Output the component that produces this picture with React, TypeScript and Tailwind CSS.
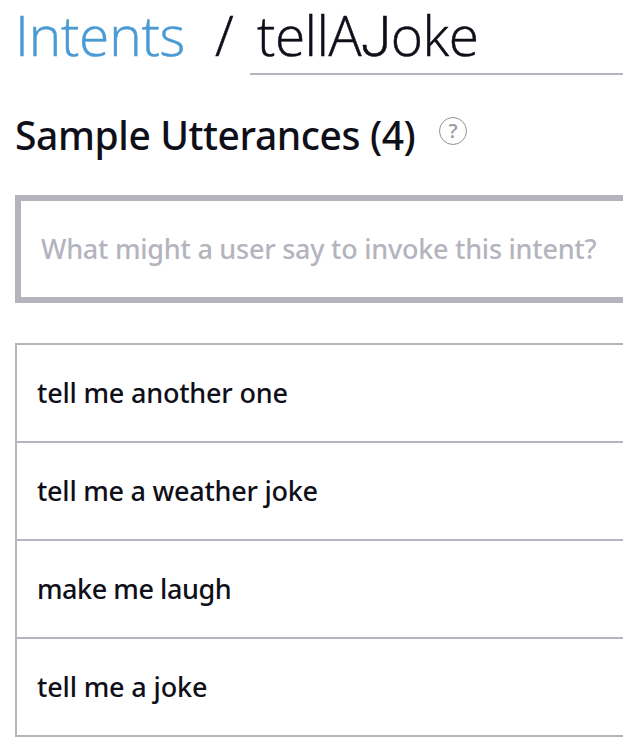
const utterances = [
  { text: "tell me another one", tracking: "tracking-[-0.2px]" },
  { text: "tell me a weather joke", tracking: "tracking-[-0.25px]" },
  { text: "make me laugh", tracking: "tracking-[-0.45px]" },
  { text: "tell me a joke", tracking: "tracking-[-0.15px]" },
];

export default function App() {
  return (
    <main className="h-[753px] w-full bg-white pl-[15px] font-['Noto_Sans',sans-serif] whitespace-nowrap text-[#0f0f19]">
      <header className="flex h-[75px] font-['Open_Sans',sans-serif] text-[55px] leading-[69px] font-light [-webkit-text-stroke:0.5px_currentColor]">
        <a className="w-[200px] text-[#4a9ad4]"><span className="tracking-[-0.2px]">Intents</span></a>
        <span className="w-[35px]">/</span>
        <div className="flex-1 border-b-2 border-[#b5b5bd] pl-[7px]">
          <span className="tracking-[-0.5px]">tellA<span className="font-[Roboto]">J</span>oke</span>
        </div>
      </header>
      <div className="flex h-[120px] pt-[35px]">
        <h1 className="w-[424px] text-[39px] leading-[50px] font-medium"><span className="tracking-[-0.4px]">Sample Utterances (4)</span></h1>
        <span className="mt-[7px] flex size-7 items-center justify-center rounded-full border border-[#92929a] font-['Open_Sans',sans-serif] text-[20px] font-semibold text-[#9c9ca4]">?</span>
      </div>
      <div className="flex h-[108px] items-center border-[6px] border-r-0 border-[#b4b4be] pl-5 text-[27px] font-medium text-[#b4b4be]">
        <span className="tracking-[-0.24px]">What might a user say to invoke this intent?</span>
      </div>
      <ul className="mt-10 border-t-2 border-l-2 border-[#b5b5bd]">
        {utterances.map(({ text, tracking }) => (
          <li key={text} className="flex h-[98px] items-center border-b-2 border-[#b5b5bd] pl-5 text-[27px] font-medium">
            <span className={tracking}>{text}</span>
          </li>
        ))}
      </ul>
    </main>
  );
}
